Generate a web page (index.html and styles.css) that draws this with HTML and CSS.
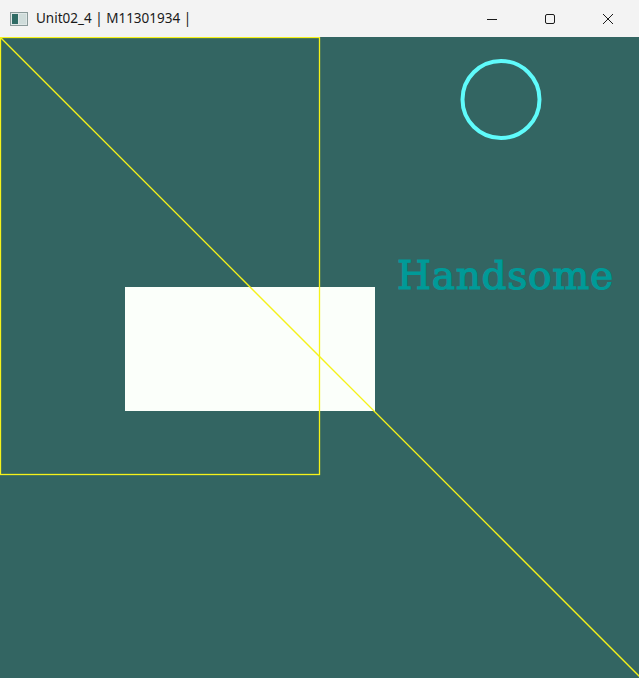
FILE: index.html
```html
<!DOCTYPE html>
<html>
<head>
<meta charset="utf-8">
<link rel="stylesheet" href="styles.css">
</head>
<body>
<div class="window">
  <div class="titlebar">
    <div class="title">
      <svg class="app-icon" width="18" height="14" viewBox="0 0 18 14">
        <rect x="0.5" y="0.5" width="17" height="13" fill="#dfe7e6" stroke="#8a9a99"/>
        <rect x="2" y="2" width="6" height="10" fill="#2f6b64"/>
        <rect x="9" y="2" width="7" height="10" fill="#cfdcda"/>
      </svg>
      <span class="title-text">Unit02_4 | M11301934 |</span>
    </div>
    <div class="controls">
      <div class="ctrl">
        <svg width="12" height="12" viewBox="0 0 12 12"><line x1="1" y1="6.5" x2="11" y2="6.5" stroke="#1a1a1a" stroke-width="1"/></svg>
      </div>
      <div class="ctrl">
        <svg width="12" height="12" viewBox="0 0 12 12"><rect x="1.5" y="1.5" width="9" height="9" rx="1.5" fill="none" stroke="#1a1a1a" stroke-width="1"/></svg>
      </div>
      <div class="ctrl">
        <svg width="12" height="12" viewBox="0 0 12 12"><path d="M1 1 L11 11 M11 1 L1 11" stroke="#1a1a1a" stroke-width="1"/></svg>
      </div>
    </div>
  </div>
  <div class="canvas">
    <svg width="639" height="641" viewBox="0 0 639 641">
      <rect x="0" y="0" width="639" height="641" fill="#336562"/>
      <rect x="125" y="250" width="250" height="124" fill="#fbfffa"/>
      <rect x="0.5" y="0.5" width="319" height="437" fill="none" stroke="#f5f21a" stroke-width="1.3"/>
      <line x1="0" y1="0" x2="641" y2="641" stroke="#f5f21a" stroke-width="1.3"/>
      <circle cx="501" cy="62.5" r="38.5" fill="none" stroke="#5ffbfb" stroke-width="4"/>
      <text x="397" y="252" class="hand" textLength="216" lengthAdjust="spacing">Handsome</text>
    </svg>
  </div>
</div>
</body>
</html>
```
FILE: styles.css
```css
html, body {
  margin: 0;
  padding: 0;
  background: #336562;
}
.window {
  width: 639px;
  height: 678px;
  display: flex;
  flex-direction: column;
  overflow: hidden;
}
.titlebar {
  height: 37px;
  flex: 0 0 37px;
  background: #f3f3f3;
  display: flex;
  align-items: center;
  justify-content: space-between;
}
.title {
  display: flex;
  align-items: center;
  gap: 8px;
  padding-left: 10px;
}
.app-icon {
  display: block;
}
.title-text {
  font-family: "Noto Sans", "Open Sans", sans-serif;
  font-size: 13.5px;
  color: #1a1a1a;
  position: relative;
  top: -1px;
}
.controls {
  display: flex;
  height: 100%;
  padding-right: 2px;
}
.ctrl {
  width: 58px;
  display: flex;
  align-items: center;
  justify-content: center;
}
.canvas {
  flex: 1;
  line-height: 0;
}
.canvas svg {
  display: block;
}
.hand {
  font-family: "DejaVu Serif", "Liberation Serif", serif;
  font-size: 39px;
  fill: #009a98;
  stroke: #009a98;
  stroke-width: 1.2px;
}
```
